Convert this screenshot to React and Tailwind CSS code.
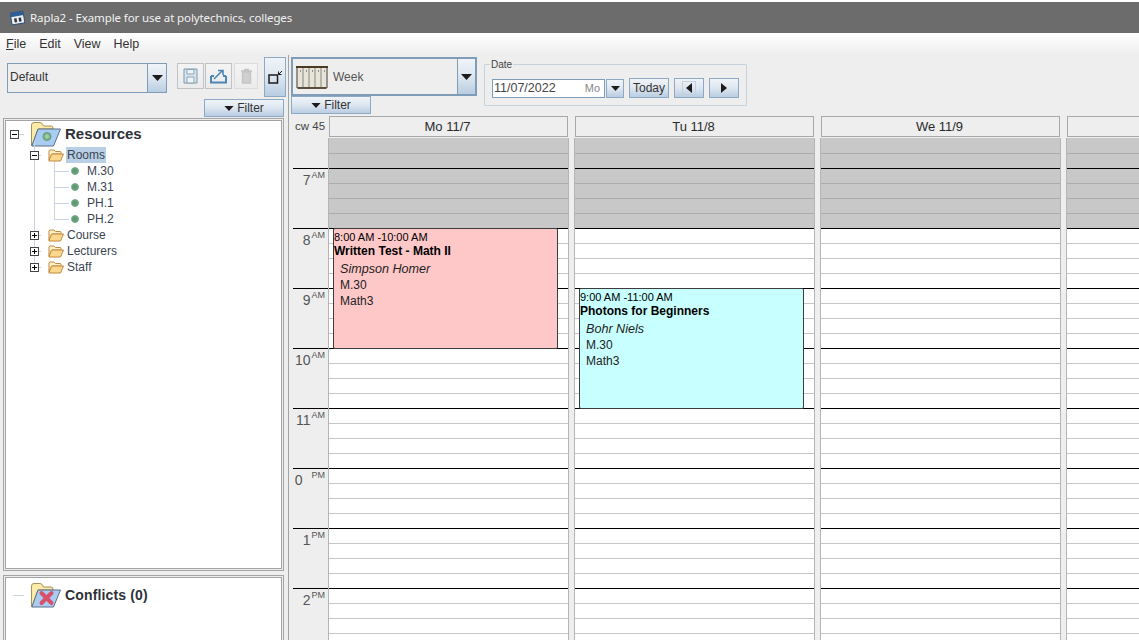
import React from "react";

const blueBtn = "bg-gradient-to-b from-[#f0f4f9] via-[#dde6f0] to-[#b9cde2]";

function Caret({ className = "", w = 11, h = 6 }) {
  return (
    <svg width={w} height={h} viewBox="0 0 11 6" className={className}>
      <path d="M0 0H11L5.5 6Z" fill="#1c1c1c" />
    </svg>
  );
}

function BigFolder({ kind }) {
  return (
    <svg width="30" height="25" viewBox="0 0 30 25" className="shrink-0">
      <path d="M.5 23.5V3Q.5 .5 3 .5H9Q11 .5 12 3L12.5 4H20Q22 4 22 6V7H7L1 23.5Z" fill="#fbeaa8" stroke="#a8905a" />
      <path d="M7 7H29.5L22.5 24H.8Z" fill="#a9cdf2" stroke="#5b6f86" />
      {kind === "res" ? (
        <>
          <circle cx="16" cy="14.5" r="4" fill="#7fb28b" stroke="#5f9a76" />
          <circle cx="16" cy="14.5" r="2" fill="#9fd0a8" />
        </>
      ) : (
        <path d="M10.5 10L20.5 20M20.5 10L10.5 20" stroke="#d8506a" strokeWidth="4" strokeLinecap="round" />
      )}
    </svg>
  );
}

function SmallFolder() {
  return (
    <svg width="16" height="13" viewBox="0 0 16 13" className="shrink-0">
      <path d="M1 11V2Q1 1 2 1H6L7.5 2.5H12Q13 2.5 13 3.5V5H4L1 11Z" fill="#fdf0cd" stroke="#c08a3a" />
      <path d="M3.5 5H15.5L12.5 12H.8Z" fill="#fbd88e" stroke="#c08a3a" />
    </svg>
  );
}

function Box({ plus }) {
  return (
    <span className="w-[9px] h-[9px] border border-[#444] bg-white flex items-center justify-center relative z-10 shrink-0">
      <span className="w-[5px] h-px bg-black absolute" />
      {plus && <span className="w-px h-[5px] bg-black absolute" />}
    </span>
  );
}

function Leaf({ label }) {
  return (
    <div className="h-4 flex items-center relative">
      <span className="w-[15px] h-px bg-[#c9d5e0] ml-[48px] shrink-0" />
      <span className="w-[8px] h-[8px] rounded-full bg-[#5d9f74] border border-[#86ad92] ml-[2px] shrink-0" />
      <span className="ml-[8px]">{label}</span>
    </div>
  );
}

function Branch({ label, open, hl }) {
  return (
    <div className="h-4 flex items-center relative">
      <span className="ml-[24px]"><Box plus={!open} /></span>
      <span className="w-[2px] h-px bg-[#c9d5e0]" />
      <span className="ml-[7px]"><SmallFolder /></span>
      <span className={`ml-[2px] px-px leading-4 ${hl ? "bg-[#b8cfe5]" : ""}`}>{label}</span>
    </div>
  );
}

function Tree() {
  return (
    <div className="relative flex-1 min-h-0 bg-white border border-[#a3a3a3] outline outline-1 outline-[#a3a3a3] outline-offset-[1px] ml-[5px] mr-[6px] text-[12px] text-[#3a4452]">
      <div className="absolute left-[28px] top-[20px] w-px h-[126px] bg-[#c9d5e0]" />
      <div className="absolute left-[48px] top-[37px] w-px h-[61px] bg-[#c9d5e0]" />
      <div className="flex items-center h-[26px]">
        <span className="ml-[4px]"><Box /></span>
        <span className="w-[5px] h-px bg-[#c9d5e0]" />
        <span className="ml-[7px]"><BigFolder kind="res" /></span>
        <span className="ml-[4px] text-[15px] font-bold text-[#2e3238]">Resources</span>
      </div>
      <div>
        <Branch label="Rooms" open hl />
        <Leaf label="M.30" />
        <Leaf label="M.31" />
        <Leaf label="PH.1" />
        <Leaf label="PH.2" />
        <Branch label="Course" />
        <Branch label="Lecturers" />
        <Branch label="Staff" />
      </div>
    </div>
  );
}

function ToolButton({ children, off }) {
  return (
    <div className={`h-[26px] shrink-0 flex items-center justify-center border ${off ? "w-[24px] ml-px border-[#dcdcdc]" : "w-[27px] border-[#bfc3c7]"} bg-gradient-to-b from-[#f4f4f4] to-[#ebebeb]`}>
      {children}
    </div>
  );
}

function LeftPanel() {
  return (
    <div className="w-[288px] shrink-0 flex flex-col min-h-0">
      <div className="h-[42px] shrink-0 flex items-start pl-[7px] pt-[2px]">
        <div className="mt-[6px] w-[160px] shrink-0 h-[30px] flex border border-[#7f9db9] bg-[#eeeeee] text-[12px] text-[#333]">
          <span className="flex-1 flex items-center pl-[2px] pb-[3px] border-r border-[#7f9db9]">Default</span>
          <span className={`w-[18px] flex items-center justify-center ${blueBtn}`}><Caret /></span>
        </div>
        <div className="mt-[6px] ml-[10px] flex gap-px">
          <ToolButton>
            <svg width="15" height="16" viewBox="0 0 15 16"><path d="M1 1H14V15H1Z" fill="#d9e5ee" stroke="#7a97ad" /><path d="M4 1.5H11V6H4ZM4 9H11V15H4Z" fill="#eef3f7" stroke="#8aa3b7" /></svg>
          </ToolButton>
          <ToolButton>
            <svg width="19" height="16" viewBox="0 0 19 16"><path d="M2 8V14.5H17V8M2 8H5M17 8H14" fill="none" stroke="#4d86b5" strokeWidth="2" /><path d="M5 11L13 3M9 2.5H14V7" fill="none" stroke="#4d86b5" strokeWidth="1.6" /></svg>
          </ToolButton>
          <ToolButton off>
            <svg width="13" height="16" viewBox="0 0 13 16"><path d="M1 3H12M4 1.5H9M2.5 4H10.5V15H2.5Z" fill="#cfcfcf" stroke="#c4c4c4" strokeWidth="1.4" /></svg>
          </ToolButton>
        </div>
        <div className={`ml-[6px] w-[22px] shrink-0 h-[40px] border border-[#8ea9c4] flex items-center justify-center ${blueBtn}`}>
          <svg width="15" height="14" viewBox="0 0 15 14"><path d="M1 5H9.5V13H1Z" fill="none" stroke="#1c1c1c" strokeWidth="1.5" /><path d="M14 1L10.5 4.5M10.5 1.5V4.5H13.5" fill="none" stroke="#1c1c1c" /></svg>
        </div>
      </div>
      <div className="h-[23px] shrink-0 flex justify-end pr-[4px] pt-[2px]">
        <div className={`w-[80px] h-[18px] flex items-center justify-center gap-[3px] border border-[#8ea9c4] text-[12px] text-[#333] ${blueBtn}`}>
          <Caret w={10} h={5} />Filter
        </div>
      </div>
      <Tree />
      <div className="h-[8px] shrink-0" />
      <div className="h-[64px] shrink-0 bg-white border border-[#a3a3a3] border-b-0 outline outline-1 outline-[#a3a3a3] outline-offset-[1px] ml-[5px] mr-[6px] -mb-px">
        <div className="flex items-center h-[30px] mt-[2px]">
          <span className="w-[11px] h-px bg-[#c9d5e0] ml-[7px]" />
          <span className="ml-[7px]"><BigFolder kind="x" /></span>
          <span className="ml-[4px] text-[14px] tracking-[0.15px] font-bold text-[#2e3238]">Conflicts (0)</span>
        </div>
      </div>
    </div>
  );
}

function NavBtn({ w, children }) {
  return (
    <div style={{ width: w }} className={`h-[20px] flex items-center justify-center border border-[#8ea9c4] text-[12px] text-[#333] ${blueBtn}`}>
      {children}
    </div>
  );
}

function Toolbar() {
  return (
    <div className="h-[61px] shrink-0 flex items-start relative">
      <div className="flex flex-col">
        <div className="mt-[2px] w-[186px] h-[39px] flex border-2 border-[#7f9db9] bg-[#eeeeee] text-[12px] text-[#555]">
          <div className="flex-1 flex items-center pl-[3px] gap-[5px]">
            <svg width="32" height="24" viewBox="0 0 32 24">
              <path d="M1 2H31V23H1Z" fill="#e7e4da" stroke="#3f3a30" />
              <path d="M0 1H32V3H0Z" fill="#4a3a20" />
              <path d="M7 3V23M13 3V23M19 3V23M25 3V23" stroke="#8a877c" />
              <path d="M4 6H4.8M10 6H10.8M16 6H16.8M22 6H22.8M28 6H28.8" stroke="#555" strokeWidth="1.5" />
              <path d="M2 23H30" stroke="#4a3a20" strokeWidth="1.5" />
            </svg>
            Week
          </div>
          <span className={`w-[18px] flex items-center justify-center border-l border-[#7f9db9] ${blueBtn}`}><Caret /></span>
        </div>
        <div className={`w-[80px] h-[18px] flex items-center justify-center gap-[3px] border border-[#8ea9c4] text-[12px] text-[#333] ${blueBtn}`}>
          <Caret w={10} h={5} />Filter
        </div>
      </div>
      <fieldset className="ml-[7px] mt-[4px] w-[263px] h-[47px] border border-[#c6d2de] rounded-[1px] pl-[7px] pr-0 pt-0">
        <legend className="text-[10px] text-[#444] -ml-[2px] px-[1px] leading-[11px]">Date</legend>
        <div className="flex items-center mt-[8px]">
          <div className="w-[113px] h-[19px] bg-white border border-[#7f9db9] flex items-center justify-between text-[12.5px] text-[#444] pl-px pr-[4px]">
            <span>11/07/2022</span><span className="text-[#888] text-[11px]">Mo</span>
          </div>
          <div className={`ml-[1px] w-[18px] h-[19px] border border-[#8ea9c4] flex items-center justify-center ${blueBtn}`}><Caret w={9} h={5} /></div>
          <div className="ml-[5px]"><NavBtn w={40}>Today</NavBtn></div>
          <div className="ml-[5px]">
            <NavBtn w={30}>
              <span className="w-[14px] h-[14px] border border-[#c4d0dc] flex items-center justify-center">
                <svg width="6" height="10" viewBox="0 0 6 10"><path d="M6 0V10L0 5Z" fill="#1c1c1c" /></svg>
              </span>
            </NavBtn>
          </div>
          <div className="ml-[5px]">
            <NavBtn w={30}>
              <svg width="6" height="10" viewBox="0 0 6 10"><path d="M0 0V10L6 5Z" fill="#1c1c1c" /></svg>
            </NavBtn>
          </div>
        </div>
      </fieldset>
    </div>
  );
}

const slots = Array.from({ length: 34 }, (_, i) => i);

function Hour({ h, s, wide }) {
  return (
    <div className="h-[60px] ml-[2px] border-b border-b-black text-[#555] flex justify-end pr-[3px] pt-[2px]">
      <span className={`text-[14px] leading-[18px] ${wide ? "mr-[8px]" : ""}`}>{h}</span>
      <span className="text-[9px] leading-[9px] ml-px">{s}</span>
    </div>
  );
}

function Event({ top, bg, time, title, who }) {
  return (
    <div style={{ top }} className={`absolute left-[4px] w-[225px] h-[121px] border border-[#3c3c3c] rounded-[2px] ${bg} text-black z-10`}>
      <div className="text-[11px] leading-[12px] mt-[2px]">{time}</div>
      <div className="text-[12px] leading-[14px] font-bold mt-[1px]">{title}</div>
      <div className="pl-[6px] mt-[3px] text-[12px] leading-4 text-[#222]">
        <div className="italic text-[12.6px]">{who}</div>
        <div>M.30</div>
        <div>Math3</div>
      </div>
    </div>
  );
}

function DayColumn({ label, event }) {
  return (
    <div className="w-[241px] shrink-0 flex flex-col relative">
      <div className="h-[22px] shrink-0 pb-px">
        <div className="h-[21px] ml-px mr-px border border-[#a8a8a8] flex items-center justify-center pr-[2px] text-[13px] text-[#2a2a2a] bg-[#eeeeee]">{label}</div>
      </div>
      <div className="relative shrink-0 border-x border-[#b5b5b5]">
        {slots.map((i) => {
          const gray = i < 6;
          const black = (i - 1) % 4 === 0;
          return (
            <div
              key={i}
              className={`${i === 0 ? "h-[16px]" : "h-[15px]"} border-b ${gray ? "bg-[#c8c8c8]" : "bg-white"} ${black ? "border-b-black" : gray ? "border-b-[#acacac]" : "border-b-[#c6c6c6]"}`}
            />
          );
        })}
        {event}
      </div>
    </div>
  );
}

function Calendar() {
  return (
    <div className="flex-1 min-h-0 flex overflow-hidden">
      <div className="w-[37px] shrink-0">
        <div className="h-[22px] flex items-center pl-[4px] text-[11.5px] text-[#444]">cw 45</div>
        <div className="h-[31px] ml-[2px] border-b border-b-black" />
        <Hour h="7" s="AM" />
        <Hour h="8" s="AM" />
        <Hour h="9" s="AM" />
        <Hour h="10" s="AM" />
        <Hour h="11" s="AM" />
        <Hour h="0" s="PM" wide />
        <Hour h="1" s="PM" />
        <Hour h="2" s="PM" />
      </div>
      <div className="flex gap-[5px]">
        <DayColumn
          label="Mo 11/7"
          event={<Event top={90} bg="bg-[#ffc8c8]" time="8:00 AM -10:00 AM" title="Written Test - Math II" who="Simpson Homer" />}
        />
        <DayColumn
          label="Tu 11/8"
          event={<Event top={150} bg="bg-[#c8ffff]" time="9:00 AM -11:00 AM" title="Photons for Beginners" who="Bohr Niels" />}
        />
        <DayColumn label="We 11/9" />
        <DayColumn label="" />
      </div>
    </div>
  );
}

export default function App() {
  return (
    <div className="w-[1139px] h-[640px] overflow-hidden flex flex-col bg-[#eeeeee] font-['Liberation_Sans',Arial,sans-serif]">
      <div className="h-[33px] shrink-0 pt-[2px] bg-white">
        <div className="h-[31px] bg-[#6c6c6c] flex items-center pl-[10px] gap-[5px] text-[11.5px] tracking-[-0.1px] text-[#f2f2f2] font-['Noto_Sans',sans-serif]">
          <svg width="15" height="16" viewBox="0 0 15 16">
            <g transform="rotate(-10 7.5 8)">
              <rect x="1" y="2" width="13" height="12" rx="1" fill="#e9eef4" stroke="#2f4f75" />
              <rect x="1" y="2" width="13" height="4" fill="#2f5f95" />
              <rect x="4" y="8" width="2.5" height="4" fill="#333" />
              <rect x="8.5" y="8" width="2.5" height="4" fill="#333" />
            </g>
          </svg>
          <span>Rapla2 - Example for use at polytechnics, colleges</span>
        </div>
      </div>
      <div className="h-[22px] shrink-0 bg-gradient-to-b from-white to-[#eeeeee] flex items-center pl-[6px] gap-[13px] text-[12.5px] text-[#333]">
        <span><span className="underline">F</span>ile</span>
        <span>Edit</span>
        <span>View</span>
        <span>Help</span>
      </div>
      <div className="flex-1 min-h-0 flex">
        <LeftPanel />
        <div className="w-[3px] shrink-0 border-l border-[#a3a3a3]" />
        <div className="flex-1 min-w-0 flex flex-col">
          <Toolbar />
          <Calendar />
        </div>
      </div>
    </div>
  );
}
